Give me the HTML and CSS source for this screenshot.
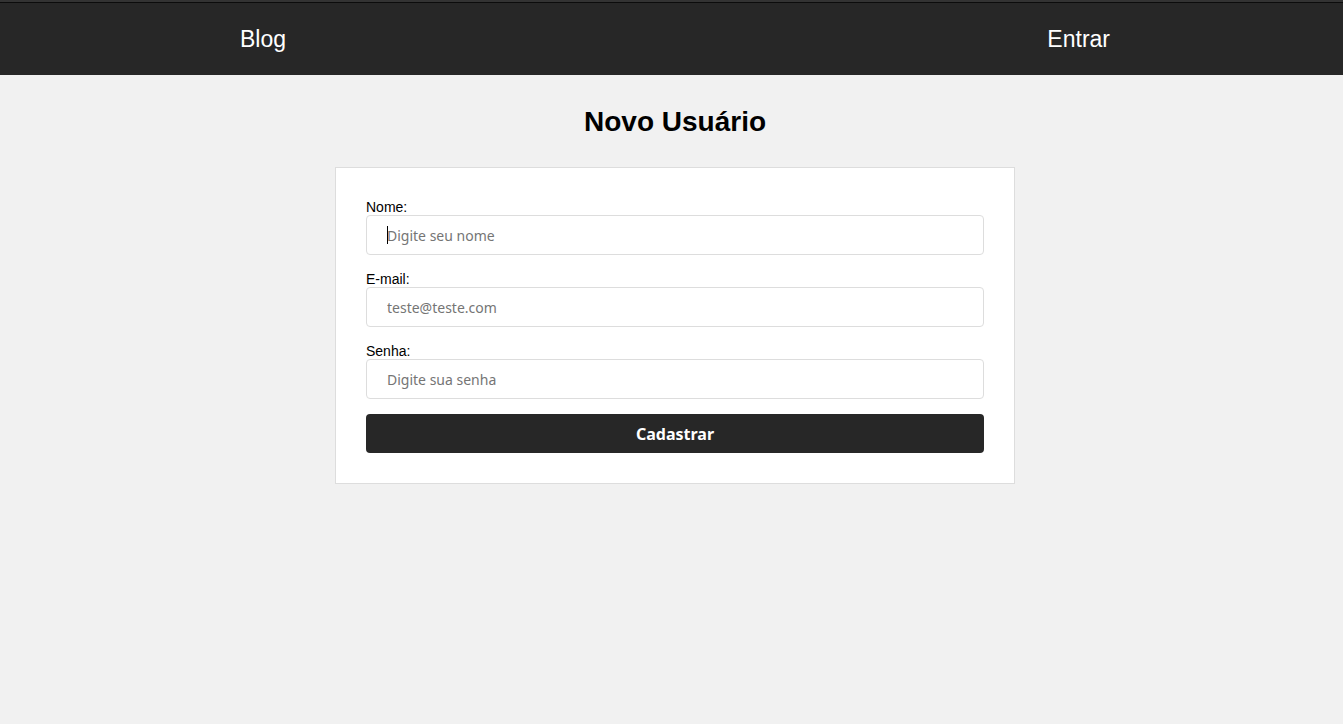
FILE: index.html
```html
<!DOCTYPE html>
<html lang="pt-BR">
<head>
  <meta charset="utf-8">
  <meta name="viewport" content="width=device-width, initial-scale=1">
  <title>Novo Usuário</title>
  <link rel="stylesheet" href="styles.css">
</head>
<body>
  <header class="header">
    <nav class="nav">
      <a class="nav-link" href="#">Blog</a>
      <a class="nav-link" href="#">Entrar</a>
    </nav>
  </header>
  <main class="page">
    <h1 class="title">Novo Usuário</h1>
    <form class="card">
      <div class="field field-active">
        <label class="label" for="nome">Nome:</label>
        <input class="input" id="nome" type="text" placeholder="Digite seu nome">
      </div>
      <div class="field">
        <label class="label" for="email">E-mail:</label>
        <input class="input" id="email" type="email" placeholder="teste@teste.com">
      </div>
      <div class="field">
        <label class="label" for="senha">Senha:</label>
        <input class="input" id="senha" type="password" placeholder="Digite sua senha">
      </div>
      <button class="button" type="submit">Cadastrar</button>
    </form>
  </main>
</body>
</html>
```
FILE: styles.css
```css
* {
  box-sizing: border-box;
  margin: 0;
  padding: 0;
}

body {
  background: #f1f1f1;
  color: #000;
  font-family: "Liberation Sans", Arial, sans-serif;
  font-size: 14px;
}

.header {
  padding-left: 7px;
  background: linear-gradient(#333 2px, #0c0c0c 2px, #0c0c0c 3px, #272727 3px);
}

.nav {
  display: flex;
  align-items: center;
  justify-content: space-between;
  max-width: 900px;
  margin: 0 auto;
  padding: 25px 15px 22px;
}

.nav-link {
  color: #fff;
  font-size: 23px;
  line-height: 28px;
  text-decoration: none;
}

.page {
  padding: 31px 0 30px 7px;
}

.title {
  margin-bottom: 29px;
  font-size: 28px;
  line-height: 32px;
  text-align: center;
}

.card {
  display: flex;
  flex-direction: column;
  gap: 15px;
  max-width: 680px;
  margin: 0 auto;
  padding: 30px;
  background: #fff;
  border: 1px solid #ddd;
}

.field {
  position: relative;
  display: flex;
  flex-direction: column;
}

/* Text cursor over the active field */
.field-active::after {
  content: "";
  position: absolute;
  bottom: 11px;
  left: 21px;
  width: 1px;
  height: 18px;
  background: #000;
}

.label {
  padding-top: 2px;
  line-height: 15px;
}

.input {
  width: 100%;
  height: 40px;
  padding: 0 20px;
  border: 1px solid #ddd;
  border-radius: 4px;
  background: #fff;
  color: #000;
  font-family: "Noto Sans", sans-serif;
  font-size: 14px;
  outline: none;
}

.input::placeholder {
  color: #757575;
}

.button {
  height: 39px;
  border: 0;
  border-radius: 4px;
  background: #272727;
  color: #fff;
  font-family: "Noto Sans", sans-serif;
  font-size: 16px;
  font-weight: 700;
  cursor: pointer;
}
```
